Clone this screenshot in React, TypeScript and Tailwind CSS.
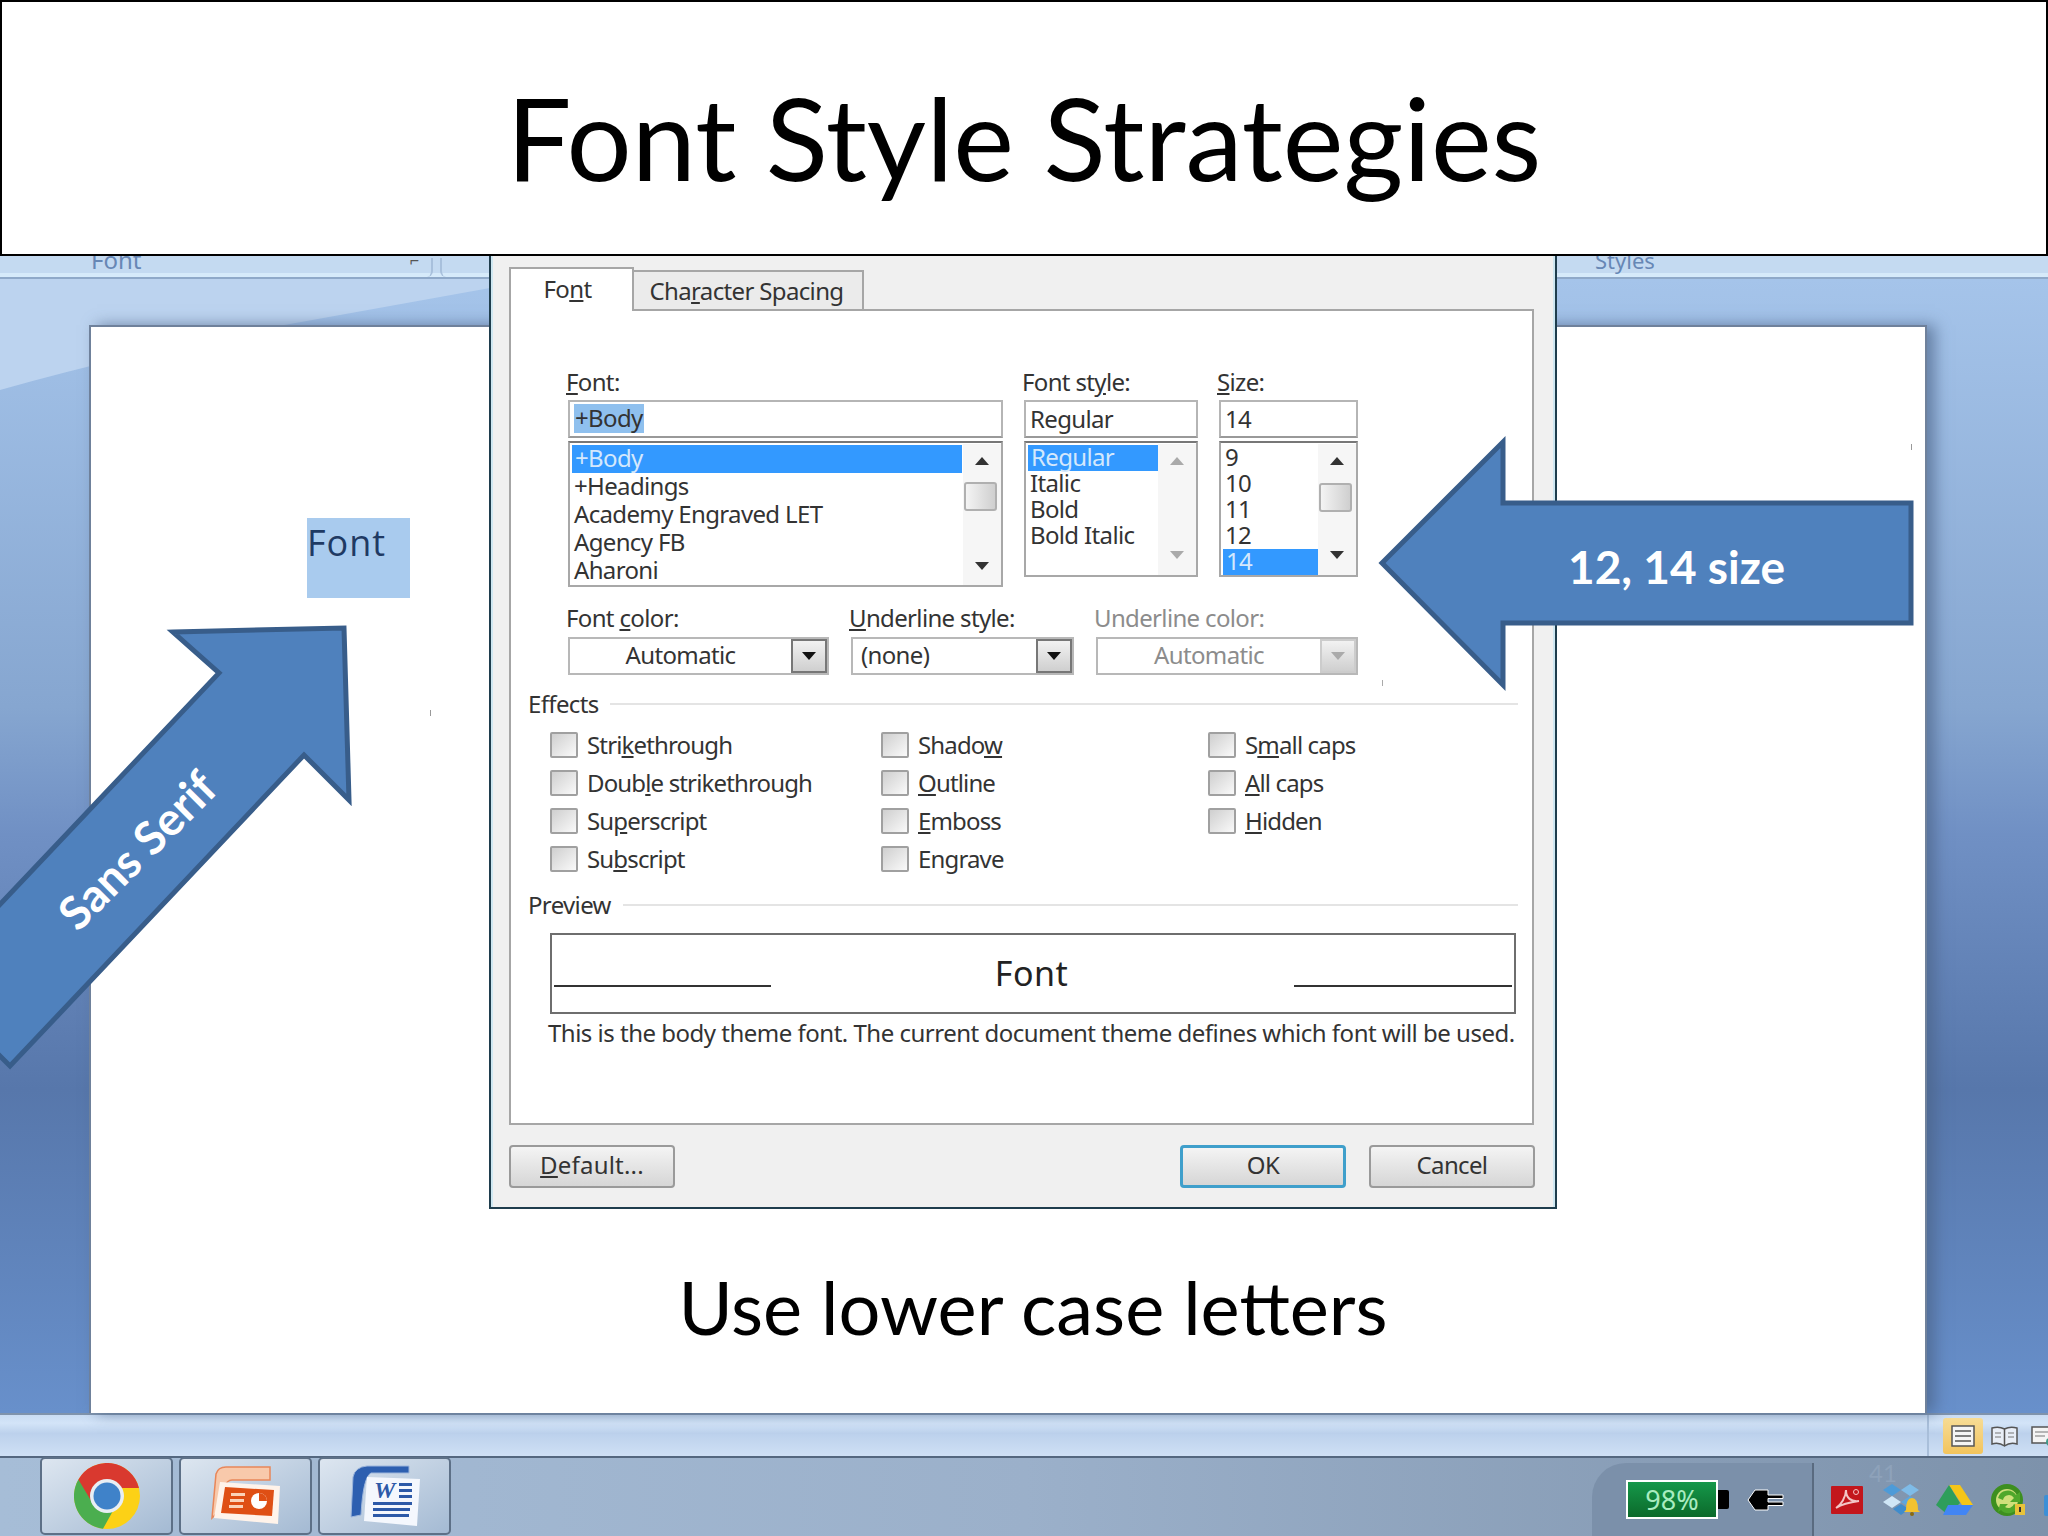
const dlg = "font-['Noto_Sans',sans-serif] text-[24px] tracking-[-0.65px] text-[#333]";

// label with an underlined access key: [before, key, after]
function Key({ t, className = "" }: { t: [string, string, string]; className?: string }) {
  return (
    <span className={className}>
      {t[0]}
      <u className="underline-offset-2">{t[1]}</u>
      {t[2]}
    </span>
  );
}

function Tri({ up, color = "#333" }: { up?: boolean; color?: string }) {
  return (
    <svg width="14" height="8" viewBox="0 0 14 8" className="block">
      <polygon points={up ? "7,0 14,8 0,8" : "0,0 14,0 7,8"} fill={color} />
    </svg>
  );
}

function ScrollBar({ thumbTop, downTop, pale }: { thumbTop?: number; downTop: number; pale?: boolean }) {
  const c = pale ? "#aaa" : "#333";
  return (
    <div className="relative h-full w-[38px] shrink-0 bg-[#f6f6f6]">
      <div className="absolute left-[12px] top-[13px]"><Tri up color={c} /></div>
      {thumbTop !== undefined && (
        <div
          className="absolute left-[1px] h-[29px] w-[33px] rounded-[3px] border-2 border-[#b0b0b0] bg-gradient-to-r from-[#f4f4f4] to-[#cfcfcf]"
          style={{ top: thumbTop }}
        />
      )}
      <div className="absolute left-[12px]" style={{ top: downTop }}><Tri color={c} /></div>
    </div>
  );
}

function Field({ text, selected }: { text: string; selected?: boolean }) {
  return (
    <div className="flex h-[38px] items-center border-2 border-[#b5b5b5] border-b-[#999] bg-white pb-[1px] pl-[4px]">
      <span className={selected ? "inline-block h-[29px] bg-[#8fc0ee] px-px leading-[27px]" : "leading-[27px]"}>{text}</span>
    </div>
  );
}

function ListBox({ rows, sel, rowH, h, bar, selW }: {
  rows: string[]; sel: number; rowH: number; h: number; bar: React.ReactNode; selW?: number;
}) {
  return (
    <div className="flex overflow-hidden border-2 border-[#a8a8a8] border-t-[#777] bg-white pl-[1px] pt-[1px]" style={{ height: h }}>
      <div className="min-w-0 flex-1 pl-[1px] pt-[1px]">
        {rows.map((r, i) => (
          <div
            key={r}
            className={i === sel ? "bg-[#3399ff] pl-[3px] text-[#d4e8fc]" : "pl-[2px]"}
            style={{ height: rowH, lineHeight: rowH - 3 + "px", width: i === sel && selW ? selW : undefined }}
          >
            {r}
          </div>
        ))}
      </div>
      {bar}
    </div>
  );
}

function Combo({ text, w, center, off }: { text: string; w: number; center?: boolean; off?: boolean }) {
  return (
    <div className="flex h-[38px] border-2 border-[#b8b8b8] bg-white" style={{ width: w }}>
      <div className={"flex flex-1 items-center pb-[2px] " + (center ? "justify-center" : "pl-[8px]") + (off ? " text-[#8c8c8c]" : "")}>{text}</div>
      <div className={"flex w-[36px] items-center justify-center border-2 bg-gradient-to-b from-[#f2f2f2] to-[#cfcfcf] " + (off ? "border-[#ccc]" : "border-[#777]")}>
        <Tri color={off ? "#aaa" : "#111"} />
      </div>
    </div>
  );
}

function Check({ t }: { t: [string, string, string] }) {
  return (
    <div className="flex h-[38px] items-center tracking-[-0.85px]">
      <span className="mr-[9px] h-[26px] w-[28px] rounded-[2px] border-2 border-[#a0a0a0] bg-gradient-to-br from-[#cfcfcf] to-[#fafafa]" />
      <Key t={t} />
    </div>
  );
}

function Btn({ children, blue }: { children: React.ReactNode; blue?: boolean }) {
  return (
    <div className={"flex h-[43px] w-[166px] items-center justify-center rounded-[4px] bg-gradient-to-b from-[#f4f4f4] to-[#d6d6d6] pb-[3px] " + (blue ? "border-[3px] border-[#3f9fcb]" : "border-2 border-[#9a9a9a]")}>
      {children}
    </div>
  );
}

function Dialog() {
  return (
    <div className={"absolute left-[489px] top-[256px] z-10 flex h-[953px] w-[1068px] flex-col border-x-2 border-b-2 border-[#1f3d4d] bg-[#f0f0f0] pl-[18px] pr-[21px] shadow-[inset_2px_0_0_#cfe8f2,inset_-2px_0_0_#cfe8f2] " + dlg}>
      <div className="flex h-[53px] shrink-0 items-end">
        <div className="relative z-10 -mb-[2px] flex h-[44px] w-[125px] items-center justify-center border-2 border-b-0 border-[#a6a6a6] bg-white pb-[2px] pr-[8px]">
          <Key t={["Fo", "n", "t"]} />
        </div>
        <div className="flex h-[39px] w-[230px] items-center justify-center border-2 border-l-0 border-b-0 border-[#a6a6a6] bg-[#ebebeb] pr-[3px]">
          <Key t={["Cha", "r", "acter Spacing"]} />
        </div>
      </div>

      <div className="h-[816px] shrink-0 border-2 border-[#a6a6a6] bg-white pl-[17px] pr-[14px] pt-[56px]">
        <div className="ml-[40px] flex items-start gap-[21px]">
          <div className="w-[435px]">
            <div className="-ml-[2px] mb-[3px] h-[30px] leading-[30px]"><Key t={["", "F", "ont:"]} /></div>
            <Field text="+Body" selected />
            <div className="mt-[3px]">
              <ListBox
                h={146}
                rowH={28}
                sel={0}
                selW={390}
                rows={["+Body", "+Headings", "Academy Engraved LET", "Agency FB", "Aharoni"]}
                bar={<ScrollBar thumbTop={38} downTop={118} />}
              />
            </div>
          </div>
          <div className="w-[174px]">
            <div className="-ml-[2px] mb-[3px] h-[30px] leading-[30px]"><Key t={["Font st", "y", "le:"]} /></div>
            <Field text="Regular" />
            <div className="mt-[3px]">
              <ListBox h={136} rowH={26} sel={0} rows={["Regular", "Italic", "Bold", "Bold Italic"]} bar={<ScrollBar downTop={107} pale />} />
            </div>
          </div>
          <div className="w-[139px]">
            <div className="-ml-[2px] mb-[3px] h-[30px] leading-[30px]"><Key t={["", "S", "ize:"]} /></div>
            <Field text="14" />
            <div className="mt-[3px]">
              <ListBox h={136} rowH={26} sel={4} rows={["9", "10", "11", "12", "14"]} bar={<ScrollBar thumbTop={39} downTop={107} />} />
            </div>
          </div>
        </div>

        <div className="ml-[40px] mt-[16px] flex gap-[22px]">
          <div>
            <div className="-ml-[2px] mb-[4px] h-[30px] leading-[29px]"><Key t={["Font ", "c", "olor:"]} /></div>
            <Combo text="Automatic" w={261} center />
          </div>
          <div>
            <div className="-ml-[2px] mb-[4px] h-[30px] leading-[29px]"><Key t={["", "U", "nderline style:"]} /></div>
            <Combo text="(none)" w={223} />
          </div>
          <div>
            <div className="-ml-[2px] mb-[4px] h-[30px] leading-[29px] text-[#8c8c8c]">Underline color:</div>
            <Combo text="Automatic" w={262} center off />
          </div>
        </div>

        <div className="mt-[14px] flex h-[30px] items-center gap-[11px]">
          <span className="pb-[1px]">Effects</span>
          <div className="h-[2px] flex-1 bg-[#e4e4e4]" />
        </div>
        <div className="ml-[22px] mt-[7px] grid grid-cols-[331px_327px_1fr]">
          <Check t={["Stri", "k", "ethrough"]} />
          <Check t={["Shado", "w", ""]} />
          <Check t={["S", "m", "all caps"]} />
          <Check t={["Doub", "l", "e strikethrough"]} />
          <Check t={["", "O", "utline"]} />
          <Check t={["", "A", "ll caps"]} />
          <Check t={["Su", "p", "erscript"]} />
          <Check t={["", "E", "mboss"]} />
          <Check t={["", "H", "idden"]} />
          <Check t={["Su", "b", "script"]} />
          <Check t={["En", "g", "rave"]} />
        </div>

        <div className="mt-[12px] flex h-[30px] items-center gap-[12px]">
          <span>Preview</span>
          <div className="h-[2px] flex-1 bg-[#e4e4e4]" />
        </div>
        <div className="relative ml-[22px] mr-[2px] mt-[13px] flex h-[81px] items-center justify-center border-2 border-[#6e6e6e]">
          <span className="pr-[3px] text-[34px] tracking-[0.5px] text-[#222]">Font</span>
          <div className="absolute bottom-[25px] left-[2px] h-[2px] w-[217px] bg-[#333]" />
          <div className="absolute bottom-[25px] right-[2px] h-[2px] w-[218px] bg-[#333]" />
        </div>
        <div className="ml-[20px] mt-[4px] h-[30px] whitespace-nowrap leading-[30px] tracking-[-0.5px]">
          This is the body theme font. The current document theme defines which font will be used.
        </div>
      </div>

      <div className="mt-[20px] flex justify-between">
        <Btn><Key t={["", "D", "efault..."]} className="tracking-[0.2px]" /></Btn>
        <div className="-mr-[1px] flex gap-[23px]">
          <Btn blue>OK</Btn>
          <Btn>Cancel</Btn>
        </div>
      </div>
    </div>
  );
}

function Arrows() {
  return (
    <svg className="pointer-events-none absolute inset-0 z-20" width="2048" height="1536" viewBox="0 0 2048 1536">
      <path d="M173,632 L344,628 L349,800 L304,755 L10,1066 L-10,1046 L-10,915 L219,673 Z" fill="#4f81bd" stroke="#385d8a" strokeWidth="5" />
      <path d="M1382,563 L1503,442 L1503,503 L1911,503 L1911,623 L1503,623 L1503,685 Z" fill="#4f81bd" stroke="#385d8a" strokeWidth="5" />
    </svg>
  );
}

function Chrome() {
  return (
    <svg width="66" height="66" viewBox="-33 -33 66 66">
      <circle r="33" fill="#fcd116" />
      <path d="M-28.6,-16.5 A33,33 0 0 0 -4,32.8 L12,4 L-14,0 Z" fill="#4bae4f" />
      <path d="M-28.6,-16.5 A33,33 0 0 1 32,-8 L0,-8 L-14,8 Z" fill="#d9392f" />
      <circle r="17" fill="#e8eef4" />
      <circle r="13.5" fill="#3f82c9" />
    </svg>
  );
}

function PptIcon() {
  return (
    <svg width="72" height="60" viewBox="0 0 72 60">
      <path d="M6,8 Q8,1 16,1 L60,1 L60,14 L22,14 Q12,14 10,44 L2,52 Z" fill="#f8c9ab" stroke="#e8875a" strokeWidth="1.5" />
      <polygon points="10,16 70,20 68,58 4,52" fill="#fff3ea" />
      <polygon points="15,21 64,24 62,50 11,47" fill="#df4f14" />
      <rect x="21" y="27" width="14" height="3" fill="#fbd3b8" />
      <rect x="20" y="33" width="14" height="3" fill="#fbd3b8" />
      <rect x="19" y="39" width="14" height="3" fill="#fbd3b8" />
      <circle cx="49" cy="35" r="8" fill="#fff" />
      <path d="M49,35 L49,27 A8,8 0 0 1 57,35 Z" fill="#df4f14" />
    </svg>
  );
}

function WordIcon() {
  return (
    <svg width="72" height="62" viewBox="0 0 72 62">
      <path d="M2,52 L4,12 Q6,2 18,1 L60,1 L60,8 L22,8 Q14,12 12,50 Z" fill="#2d5fb0" stroke="#9db6dc" strokeWidth="1" />
      <polygon points="18,12 71,14 68,61 15,56" fill="#f4f7fd" />
      <text x="25" y="33" fontFamily="Liberation Serif, serif" fontStyle="italic" fontWeight="700" fontSize="24" fill="#2c59a8">W</text>
      <rect x="50" y="18" width="13" height="3" fill="#2c59a8" />
      <rect x="50" y="24" width="13" height="3" fill="#2c59a8" />
      <rect x="50" y="30" width="13" height="3" fill="#2c59a8" />
      <rect x="24" y="37" width="39" height="3" fill="#2c59a8" />
      <rect x="24" y="43" width="37" height="3" fill="#2c59a8" />
      <rect x="24" y="49" width="36" height="3" fill="#2c59a8" />
    </svg>
  );
}

function TaskBtn({ children }: { children: React.ReactNode }) {
  return (
    <div className="flex h-[78px] w-[133px] items-center justify-center rounded-[5px] border-2 border-[#5d7087] bg-gradient-to-br from-[#dde6f0] to-[#a4bad3]">
      {children}
    </div>
  );
}

function TrayIcons() {
  return (
    <div className="flex items-center">
      <svg width="32" height="28" viewBox="0 0 32 28" className="ml-[17px]">
        <rect width="32" height="28" rx="1" fill="#c3161c" />
        <path d="M5,22 C10,19 15,11 15,4 C15,12 20,16 28,15 C20,16 11,18 5,22 Z" fill="none" stroke="#f3c6c6" strokeWidth="2" />
        <circle cx="25" cy="6" r="2.5" fill="none" stroke="#f3c6c6" strokeWidth="1" />
      </svg>
      <svg width="38" height="32" viewBox="0 0 38 32" className="ml-[19px]">
        <polygon points="10,0 19,6 10,12 1,6" fill="#4d9bd8" />
        <polygon points="28,0 37,6 28,12 19,6" fill="#7fbce8" />
        <polygon points="10,12 19,18 10,24 1,18" fill="#cfe6f6" />
        <polygon points="28,12 37,18 28,24 19,18" fill="#5da6de" />
        <polygon points="19,20 27,25 19,31 11,25" fill="#3f8ccc" />
        <path d="M24,26 Q24,14 30,14 Q36,14 36,26 L38,28 L22,28 Z" fill="#f2c230" />
        <circle cx="30" cy="30" r="2" fill="#8a6a10" />
      </svg>
      <svg width="37" height="30" viewBox="0 0 37 30" className="ml-[16px]">
        <polygon points="13,0 24,0 37,20 26,20" fill="#f5c518" />
        <polygon points="13,0 24,18 12,30 0,20" fill="#2e9e5b" />
        <polygon points="12,20 37,20 30,30 7,30" fill="#4285f4" />
      </svg>
      <svg width="36" height="32" viewBox="0 0 36 32" className="ml-[17px]">
        <circle cx="17" cy="16" r="16" fill="#3d8f1f" />
        <circle cx="17" cy="16" r="11" fill="#cfe07a" />
        <path d="M8,14 A10,10 0 0 1 26,11 L30,8 L30,18 L20,18 L24,14 A6,6 0 0 0 13,16 Z" fill="#4fa82b" />
        <path d="M10,20 L18,20 L15,23 A6,6 0 0 0 24,20 L28,22 A10,10 0 0 1 11,26 L8,28 Z" fill="#4fa82b" />
        <rect x="25" y="20" width="10" height="11" fill="#e8c33a" />
        <rect x="29" y="23" width="2" height="5" fill="#333" />
      </svg>
      <div className="ml-[18px] h-[21px] w-[20px] self-end rounded-[2px] bg-[#3d8fd6]" />
    </div>
  );
}

export default function App() {
  return (
    <div className="relative flex h-[1536px] w-[2048px] flex-col overflow-hidden bg-white">
      <header className="relative z-30 flex h-[256px] shrink-0 items-center justify-center border-2 border-black bg-white pt-[16px]">
        <h1 className="font-['Lato',sans-serif] text-[115px] font-normal leading-none text-black">Font Style Strategies</h1>
      </header>

      {/* word window behind the dialog */}
      <main className="relative flex min-h-0 flex-1 flex-col bg-[linear-gradient(#a5c4ea_2%,#86a6d0_39%,#7090c4_50%,#5777ab_72%,#6890cb_100%)]">
        <svg className="absolute left-0 top-0" width="500" height="150" viewBox="0 0 500 150">
          <path d="M0,0 L500,0 L490,32 L290,68 Q150,92 0,134 Z" fill="#bcd3ef" />
        </svg>
        <div className="relative flex h-[23px] shrink-0 items-end overflow-hidden border-b-2 border-[#8fa9c9] bg-[#c4daf1] font-['Noto_Sans',sans-serif] text-[24px] text-[#6787b5] shadow-[inset_0_-4px_0_#d6eafa]">
          <div className="flex h-[19px] w-[433px] justify-between rounded-br-[6px] border-r-2 border-[#a8c0dc] pl-[91px] pr-[12px] leading-[4px]">
            <span>Font</span>
            <span className="text-[16px] text-[#555]">⌐</span>
          </div>
          <div className="ml-[7px] h-[19px] w-[60px] rounded-bl-[6px] border-l-2 border-[#a8c0dc]" />
          <div className="ml-[1095px] h-[19px] text-[22px] leading-[4px]">Styles</div>
        </div>

        <section className="relative z-0 ml-[89px] mt-[46px] flex min-h-0 w-[1838px] flex-1 flex-col border-l-2 border-r-2 border-t-2 border-[#6f819b] bg-white shadow-[8px_0_14px_#4a6285aa]">
          <div className="ml-[216px] mt-[191px] h-[80px] w-[103px] bg-[#a9cbee] font-['Open_Sans',sans-serif] text-[36px] leading-[50px] tracking-[1px] text-[#1f3a63]">
            Font
          </div>
          <p className="mt-[659px] w-full pl-[50px] text-center font-['Lato',sans-serif] text-[74px] leading-[100px] text-black">
            Use lower case letters
          </p>
          <i className="absolute left-[339px] top-[383px] h-[6px] w-px bg-[#999]" />
          <i className="absolute left-[1820px] top-[117px] h-[6px] w-px bg-[#999]" />
        </section>
      </main>

      {/* status bar */}
      <div className="flex h-[43px] shrink-0 justify-end border-t-2 border-[#7f93ac] bg-[linear-gradient(#c9dcf4,#d3e4f8_20%,#bcd1ec_45%,#cfe0f5)]">
        <div className="flex w-[121px] items-center gap-[8px] border-l-2 border-[#a9bfda] pl-[14px]">
          <div className="flex h-[36px] w-[40px] items-center justify-center rounded-[3px] bg-gradient-to-b from-[#f7dc95] to-[#f2c45c]">
            <svg width="24" height="22" viewBox="0 0 24 22">
              <rect x="1" y="1" width="22" height="20" fill="#f4f4f4" stroke="#555" strokeWidth="1.5" />
              <path d="M4,6 H20 M4,11 H20 M4,16 H20" stroke="#555" strokeWidth="1.5" />
            </svg>
          </div>
          <svg width="27" height="22" viewBox="0 0 27 22">
            <path d="M13.5,4 Q8,1 1,3 V19 Q8,17 13.5,21 Q19,17 26,19 V3 Q19,1 13.5,4 Z V21" fill="#e8eef7" stroke="#555" strokeWidth="1.5" />
            <path d="M4,8 H10 M4,12 H10 M17,8 H23 M17,12 H23" stroke="#777" strokeWidth="1.2" />
          </svg>
          <svg width="22" height="22" viewBox="0 0 22 22" className="-mr-[10px] ml-[5px] shrink-0">
            <rect x="1" y="2" width="22" height="16" fill="#f4f4f4" stroke="#555" strokeWidth="1.5" />
            <path d="M4,7 H20 M4,11 H14" stroke="#777" strokeWidth="1.2" />
            <circle cx="19" cy="17" r="4" fill="#3d9a8a" />
          </svg>
        </div>
      </div>

      {/* windows taskbar */}
      <footer className="flex h-[80px] shrink-0 items-end border-t-2 border-[#54677f] bg-gradient-to-r from-[#a6bdd7] via-[#9bb0ca] to-[#7d92ab]">
        <div className="mb-0 ml-[40px] flex gap-[6px] pb-px">
          <TaskBtn><Chrome /></TaskBtn>
          <TaskBtn><PptIcon /></TaskBtn>
          <TaskBtn><WordIcon /></TaskBtn>
        </div>
        <div className="relative ml-[1141px] flex h-[73px] w-[222px] shrink-0 items-center rounded-tl-[34px] border-r-2 border-[#5a6b80] bg-[#7b90aa] pl-[34px]">
          <div className="flex h-[39px] w-[92px] items-center justify-center border-2 border-white bg-gradient-to-b from-[#15984a] to-[#0c6a2b] font-['Noto_Sans',sans-serif] text-[27px] leading-none text-[#a9ecc0]">
            98%
          </div>
          <div className="h-[19px] w-[11px] rounded-r-[2px] bg-black" />
          <svg width="38" height="24" viewBox="0 0 38 24" className="ml-[18px]">
            <path d="M1,12 L8,2 H21 V7 H36 V10.5 H21 V14 H36 V17.5 H21 V22 H8 Z" fill="#000" stroke="#fff" strokeWidth="1" />
          </svg>
        </div>
        <div className="relative flex h-[73px] items-center">
          <TrayIcons />
          <span className="absolute left-[55px] -top-[2px] font-['Lato',sans-serif] text-[24px] leading-none text-[#8ea2ba]">41</span>
        </div>
      </footer>

      <Dialog />
      <Arrows />
      <div className="absolute left-[137px] top-[850px] z-20 -translate-x-1/2 -translate-y-1/2 -rotate-[45deg] whitespace-nowrap font-['Lato',sans-serif] text-[46px] font-bold leading-none text-white">
        Sans Serif
      </div>
      <div className="absolute left-[1568px] top-[535px] z-20 whitespace-nowrap font-['Lato',sans-serif] text-[46px] font-bold leading-[64px] text-white">
        12, 14 size
      </div>
      <i className="absolute left-[1382px] top-[680px] z-10 h-[6px] w-px bg-[#aaa]" />
    </div>
  );
}
